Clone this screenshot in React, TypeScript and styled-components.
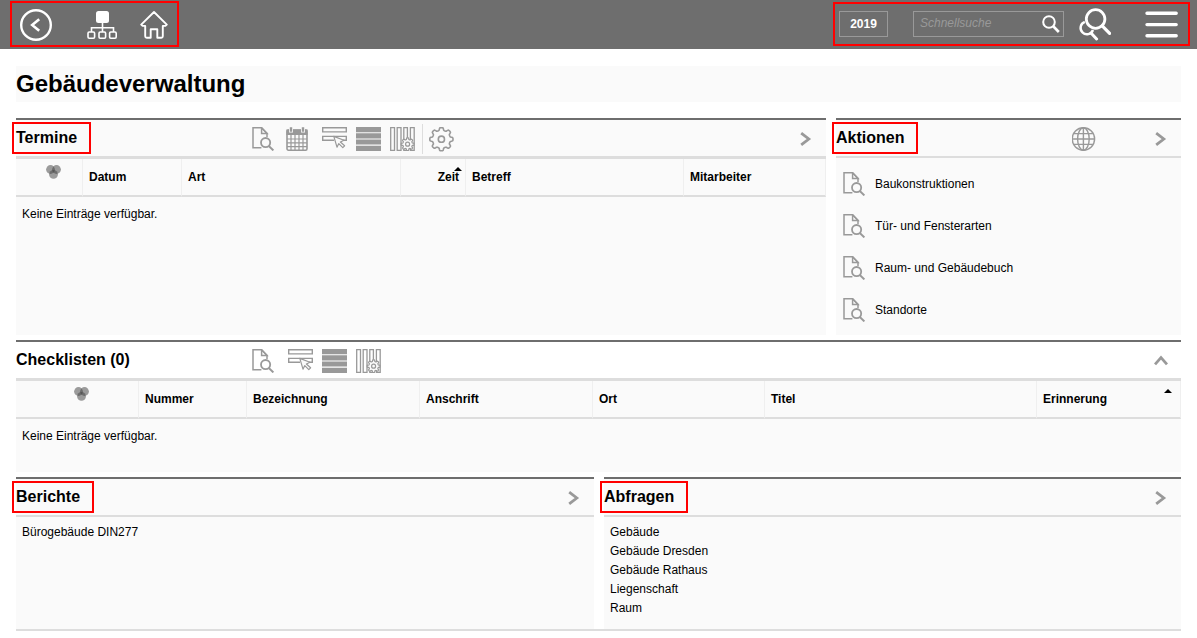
import React from "react";
import styled, { createGlobalStyle, css } from "styled-components";

const color = {
  bar: "#6e6e6e",
  panel: "#fafafa",
  line: "#dddddd",
  cell: "#efefef",
  icon: "#999999",
  mark: "#ff0000",
};

const GlobalStyle = createGlobalStyle`
  *, *::before, *::after { box-sizing: border-box; }
  body {
    margin: 0;
    background: #fff;
    color: #000;
    font: 12px/19px "Liberation Sans", Arial, sans-serif;
  }
`;

/* ---------- top bar ---------- */

const TopBar = styled.header`
  display: flex;
  justify-content: space-between;
  align-items: flex-start;
  height: 49px;
  padding: 1px 7px 0 10px;
  background: ${color.bar};
`;

const BarGroup = styled.div<{ $end?: boolean }>`
  display: flex;
  align-items: center;
  border: 2px solid ${color.mark};
  ${(p) =>
    p.$end
      ? css`
          height: 44px;
          margin-top: 1px;
          padding: 0 10px 0 4px;
        `
      : css`
          height: 46px;
          padding: 2px 9px 0 8px;
        `}
`;

const IconButton = styled.button<{ $before?: number }>`
  display: block;
  flex: none;
  margin: 0 0 0 ${(p) => p.$before ?? 0}px;
  padding: 0;
  border: 0;
  background: none;
  color: inherit;
  cursor: pointer;

  svg {
    display: block;
  }
`;

const BarButton = styled(IconButton)`
  color: #fff;
`;

const YearButton = styled.button`
  width: 49px;
  height: 26px;
  padding: 0;
  border: 1px solid #999;
  background: none;
  color: #fff;
  font: bold 12px/24px "Liberation Sans", Arial, sans-serif;
  cursor: pointer;
`;

const SearchBox = styled.form`
  display: flex;
  align-items: center;
  width: 151px;
  height: 26px;
  margin-left: 25px;
  padding: 0 3px 0 6px;
  border: 1px solid #999;
`;

const SearchInput = styled.input`
  flex: 1;
  min-width: 0;
  height: 22px;
  padding: 0 0 2px;
  border: 0;
  outline: 0;
  background: none;
  color: #fff;
  font: italic 12px/20px "Liberation Sans", Arial, sans-serif;

  &::placeholder {
    color: #999;
    opacity: 1;
  }
`;

/* ---------- page ---------- */

const Page = styled.main`
  padding: 17px 16px 2px;
`;

const PageTitle = styled.h1`
  margin: 0 0 16px;
  background: ${color.panel};
  font-size: 24px;
  line-height: 36px;
`;

const Row = styled.div<{ $columns: string; $closed?: boolean }>`
  display: grid;
  grid-template-columns: ${(p) => p.$columns};
  gap: 10px;
  margin-bottom: 5px;
  border-bottom: ${(p) => (p.$closed ? `2px solid ${color.line}` : "0")};
`;

const Panel = styled.section`
  min-width: 0;
  border-top: 2px solid ${color.bar};
  background: ${color.panel};
`;

const PanelHead = styled.div<{ $table?: boolean; $plain?: boolean }>`
  display: grid;
  grid-template-columns: 236px 1fr auto;
  align-items: start;
  height: ${(p) => (p.$table ? 39 : 38)}px;
  padding-right: 13px;
  border-bottom: ${(p) => (p.$table ? 3 : 2)}px solid ${color.line};
  background: ${(p) => (p.$plain ? "#fff" : "transparent")};
  color: ${color.icon};
`;

const PanelTitle = styled.h2<{ $marked?: boolean }>`
  position: relative;
  justify-self: start;
  margin: 0;
  color: #000;
  font-size: 16px;
  line-height: 35px;

  ${(p) =>
    p.$marked &&
    css`
      &::after {
        content: "";
        position: absolute;
        inset: 2px -14px 1px -4px;
        border: 2px solid ${color.mark};
      }
    `}
`;

const Tools = styled.div`
  display: flex;
  align-items: flex-start;
  gap: 6px;
  padding-top: 7px;
`;

const Divider = styled.span`
  width: 1px;
  height: 30px;
  margin-top: -3px;
  background: ${color.line};
`;

const Toggle = styled(IconButton)`
  grid-column: 3;
  margin-top: 11px;
`;

/* ---------- tables ---------- */

const Table = styled.table`
  width: 100%;
  table-layout: fixed;
  border-collapse: separate;
  border-spacing: 0;
`;

const Col = styled.col<{ $w: number }>`
  width: ${(p) => p.$w}px;
`;

const Th = styled.th<{ $right?: boolean }>`
  position: relative;
  height: 38px;
  padding: 0 6px;
  border-right: 1px solid ${color.cell};
  border-bottom: 2px solid ${color.line};
  text-align: ${(p) => (p.$right ? "right" : "left")};
`;

const ThIcon = styled(Th)`
  padding: 6px 0 0 8px;
  vertical-align: top;

  svg {
    display: block;
    margin: 0 auto;
  }
`;

const SortMark = styled.span<{ $right: number }>`
  position: absolute;
  top: 8px;
  right: ${(p) => p.$right}px;
  border: solid transparent;
  border-width: 0 4px 4px;
  border-bottom-color: #000;
`;

const EmptyCell = styled.td<{ $h: number }>`
  height: ${(p) => p.$h}px;
  padding: 8px 6px 0;
  vertical-align: top;
`;

/* ---------- lists ---------- */

const LinkList = styled.ul`
  min-height: 112px;
  margin: 0;
  padding: 6px 6px 11px;
  list-style: none;
`;

const ActionList = styled.ul`
  margin: 0;
  padding: 5px 7px 4px;
  list-style: none;
`;

const TextLink = styled.a`
  color: #000;
  text-decoration: none;
`;

const ActionLink = styled(TextLink)`
  display: flex;
  align-items: center;
  gap: 4px;
  height: 42px;

  svg {
    color: ${color.icon};
  }
`;

/* ---------- icons ---------- */

/** Closed outline of a cog with rounded teeth, the first one pointing up. */
function cog(cx: number, cy: number, inner: number, outer: number, teeth = 8) {
  const points: string[] = [];
  const steps = teeth * 16;
  for (let i = 0; i < steps; i++) {
    const a = (i / steps) * Math.PI * 2;
    const wave = Math.tanh(2.6 * Math.cos(a * teeth)) / Math.tanh(2.6);
    const r = (inner + outer) / 2 + ((outer - inner) / 2) * wave;
    points.push(`${(cx + r * Math.sin(a)).toFixed(2)} ${(cy - r * Math.cos(a)).toFixed(2)}`);
  }
  return `M${points.join("L")}Z`;
}

const stroke = { fill: "none", stroke: "currentColor" } as const;

const BackIcon = () => (
  <svg width="32" height="32" viewBox="0 0 32 32" {...stroke}>
    <circle cx="16" cy="16" r="14.8" strokeWidth="2.4" />
    <path d="M19.2 10.2 12.2 16l7 5.8" strokeWidth="2.6" />
  </svg>
);

const SitemapIcon = () => (
  <svg width="30" height="32" viewBox="0 0 30 32" {...stroke} strokeWidth="1.6">
    <rect x="9" y="2" width="13" height="12" rx="2.5" fill="currentColor" stroke="none" />
    <path d="M15.5 13v10M4.5 23v-4.2h22V23" />
    <rect x="1" y="23" width="6.6" height="6.2" rx="1.2" />
    <rect x="12" y="23" width="6.6" height="6.2" rx="1.2" />
    <rect x="22.6" y="23" width="6.6" height="6.2" rx="1.2" />
  </svg>
);

const HomeIcon = () => (
  <svg width="28" height="32" viewBox="0 0 28 32" {...stroke} strokeWidth="1.9" strokeLinejoin="round">
    <path d="M14 3 1.2 15.6l1.4 1.3h2.6v10.3q0 1.5 1.5 1.5h4v-8.4h6.6v8.4h4q1.5 0 1.5-1.5V16.9h2.6l1.4-1.3Z" />
  </svg>
);

const SearchIcon = () => (
  <svg width="18" height="18" viewBox="0 0 18 18" {...stroke}>
    <circle cx="7" cy="7" r="5.8" strokeWidth="2" />
    <path d="m11 11 5.8 6" strokeWidth="2.6" />
  </svg>
);

const DoubleSearchIcon = () => (
  <svg width="33" height="34" viewBox="0 -1 33 34" {...stroke}>
    <circle cx="17.6" cy="11" r="9.3" strokeWidth="2.8" />
    <path d="m24.2 17.8 7.4 7.6" strokeWidth="3.2" strokeLinecap="round" />
    <path d="M6.8 13.8a6.4 6.4 0 1 0 8.2 8.2" strokeWidth="2.4" />
    <path d="m13 25 5.6 6" strokeWidth="3" strokeLinecap="round" />
  </svg>
);

const MenuIcon = () => (
  <svg width="33" height="28" viewBox="0 0 33 28" {...stroke} strokeWidth="3.4" strokeLinecap="round">
    <path d="M2 3.3h29.2M2 14.6h29.2M2 25.8h29.2" />
  </svg>
);

const DocSearchIcon = () => (
  <svg width="28" height="24" viewBox="0 0 28 24" {...stroke} strokeWidth="1.5">
    <path d="M9.4 20.8H1V.8h8.6L15 6.4V10" />
    <path d="M9.6.8v5.6H15Z" />
    <circle cx="13.6" cy="15.6" r="4.6" strokeWidth="1.8" />
    <path d="m16.8 19 4.6 4.4" strokeWidth="2" />
  </svg>
);

const CalendarIcon = () => (
  <svg width="28" height="24" viewBox="0 0 28 24" {...stroke} strokeWidth="1.2">
    <rect x="1" y="3" width="20" height="20.2" rx="1.4" strokeWidth="1.6" />
    <path d="M1 3h20v4.4H1Z" fill="currentColor" />
    <path d="M1 12h20M1 15.8h20M1 19.6h20M5 8v15M9 8v15M13 8v15M17 8v15" />
    <path d="M5 0v5.4M17 0v5.4" stroke={color.panel} strokeWidth="4" />
    <path d="M5 .2v4.6M17 .2v4.6" strokeWidth="2.4" />
  </svg>
);

const SelectIcon = () => (
  <svg width="28" height="24" viewBox="0 0 28 24" {...stroke} strokeWidth="1.4">
    <path d="M2.7.7h23.6v4.2H2.7ZM14 13.2H2.7V9.4h23.6v3.8H23" />
    <path
      d="m13.8 9.4 10.2 3.8-3.6 1.8 4.2 3.8-1.8 1.8-4-4-1.8 3.6Z"
      fill={color.panel}
      strokeWidth="1.2"
      strokeLinejoin="round"
    />
  </svg>
);

const RowsIcon = () => (
  <svg width="28" height="24" viewBox="0 0 28 24" fill="currentColor">
    <path d="M2 0h25v5.2H2ZM2 6.2h25v5.2H2ZM2 12.4h25v5.2H2ZM2 18.8h25V24H2Z" />
  </svg>
);

const ColumnsIcon = () => (
  <svg width="28" height="24" viewBox="0 0 28 24" {...stroke} strokeWidth="1.3">
    <path d="M2.7.7h3.8v22.6H2.7ZM9.2.7H13v22.6H9.2ZM15.8.7h3.6v22.6h-3.6ZM22.4.7h3.8v22.6h-3.8Z" />
    <path d={cog(19.6, 17.2, 4.8, 6.4)} fill={color.panel} strokeWidth="1.2" />
    <circle cx="19.6" cy="17.2" r="2" strokeWidth="1.2" />
  </svg>
);

const GearIcon = () => (
  <svg width="26" height="26" viewBox="0 0 26 26" {...stroke} strokeWidth="1.6">
    <path d={cog(12.4, 12.2, 9, 11.6)} strokeLinejoin="round" />
    <circle cx="12.4" cy="12.2" r="3.1" />
  </svg>
);

const GlobeIcon = () => (
  <svg width="26" height="24" viewBox="0 0 26 24" {...stroke} strokeWidth="1.4">
    <circle cx="11.4" cy="12" r="11.2" />
    <ellipse cx="11.4" cy="12" rx="5.8" ry="11.2" />
    <path d="M11.4.8v22.4M.2 12h22.4M2 6.6h18.8M2 17.4h18.8" />
  </svg>
);

const ChevronIcon = ({ up = false }: { up?: boolean }) => (
  <svg width="14" height="16" viewBox="0 0 14 16" {...stroke} strokeWidth="2.8">
    <path d={up ? "M1 11.4 7 4.6l6 6.8" : "M2.2 2.2 9.8 8l-7.6 5.8"} />
  </svg>
);

const CirclesIcon = () => (
  <svg width="15" height="14" viewBox="0 0 15 14" fill="#444" fillOpacity="0.52">
    <circle cx="4.5" cy="4.5" r="4.4" />
    <circle cx="10.5" cy="4.5" r="4.4" />
    <circle cx="7.5" cy="9.4" r="4.4" />
  </svg>
);

/* ---------- data and parts ---------- */

type Column = { label: string; width: number; right?: boolean; sort?: number };

const appointments: Column[] = [
  { label: "", width: 67 },
  { label: "Datum", width: 99 },
  { label: "Art", width: 219 },
  { label: "Zeit", width: 65, right: true, sort: 3 },
  { label: "Betreff", width: 218 },
  { label: "Mitarbeiter", width: 142 },
];

const checklists: Column[] = [
  { label: "", width: 123 },
  { label: "Nummer", width: 108 },
  { label: "Bezeichnung", width: 173 },
  { label: "Anschrift", width: 173 },
  { label: "Ort", width: 172 },
  { label: "Titel", width: 272 },
  { label: "Erinnerung", width: 144, sort: 8 },
];

const actions = ["Baukonstruktionen", "Tür- und Fensterarten", "Raum- und Gebäudebuch", "Standorte"];
const queries = ["Gebäude", "Gebäude Dresden", "Gebäude Rathaus", "Liegenschaft", "Raum"];

function EmptyTable({ columns, bodyHeight }: { columns: Column[]; bodyHeight: number }) {
  return (
    <Table>
      <colgroup>
        {columns.map((c) => (
          <Col key={c.label} $w={c.width} />
        ))}
      </colgroup>
      <thead>
        <tr>
          {columns.map((c) =>
            c.label ? (
              <Th key={c.label} scope="col" $right={c.right}>
                {c.label}
                {c.sort !== undefined && <SortMark $right={c.sort} />}
              </Th>
            ) : (
              <ThIcon key="status" scope="col" aria-label="Status">
                <CirclesIcon />
              </ThIcon>
            ),
          )}
        </tr>
      </thead>
      <tbody>
        <tr>
          <EmptyCell colSpan={columns.length} $h={bodyHeight}>
            Keine Einträge verfügbar.
          </EmptyCell>
        </tr>
      </tbody>
    </Table>
  );
}

const Tool = ({ label, children }: { label: string; children: React.ReactNode }) => (
  <IconButton type="button" aria-label={label}>
    {children}
  </IconButton>
);

export default function App() {
  return (
    <>
      <GlobalStyle />
      <TopBar>
        <BarGroup>
          <BarButton type="button" aria-label="Zurück"><BackIcon /></BarButton>
          <BarButton type="button" aria-label="Struktur" $before={35}><SitemapIcon /></BarButton>
          <BarButton type="button" aria-label="Startseite" $before={23}><HomeIcon /></BarButton>
        </BarGroup>
        <BarGroup $end>
          <YearButton type="button">2019</YearButton>
          <SearchBox role="search" onSubmit={(e) => e.preventDefault()}>
            <SearchInput type="text" placeholder="Schnellsuche" aria-label="Schnellsuche" />
            <BarButton type="submit" aria-label="Suchen"><SearchIcon /></BarButton>
          </SearchBox>
          <BarButton type="button" aria-label="Erweiterte Suche" $before={14}><DoubleSearchIcon /></BarButton>
          <BarButton type="button" aria-label="Menü" $before={34}><MenuIcon /></BarButton>
        </BarGroup>
      </TopBar>

      <Page>
        <PageTitle>Gebäudeverwaltung</PageTitle>

        <Row $columns="810fr 345fr">
          <Panel>
            <PanelHead $table>
              <PanelTitle $marked>Termine</PanelTitle>
              <Tools>
                <Tool label="Anzeigen"><DocSearchIcon /></Tool>
                <Tool label="Kalender"><CalendarIcon /></Tool>
                <Tool label="Auswählen"><SelectIcon /></Tool>
                <Tool label="Zeilen"><RowsIcon /></Tool>
                <Tool label="Spalten"><ColumnsIcon /></Tool>
                <Divider />
                <Tool label="Einstellungen"><GearIcon /></Tool>
              </Tools>
              <Toggle type="button" aria-label="Termine öffnen"><ChevronIcon /></Toggle>
            </PanelHead>
            <EmptyTable columns={appointments} bodyHeight={138} />
          </Panel>

          <Panel>
            <PanelHead>
              <PanelTitle $marked>Aktionen</PanelTitle>
              <Tools>
                <Tool label="Web"><GlobeIcon /></Tool>
              </Tools>
              <Toggle type="button" aria-label="Aktionen öffnen"><ChevronIcon /></Toggle>
            </PanelHead>
            <ActionList>
              {actions.map((a) => (
                <li key={a}>
                  <ActionLink href="#"><DocSearchIcon />{a}</ActionLink>
                </li>
              ))}
            </ActionList>
          </Panel>
        </Row>

        <Row $columns="1fr">
          <Panel>
            <PanelHead $table $plain>
              <PanelTitle>Checklisten (0)</PanelTitle>
              <Tools>
                <Tool label="Anzeigen"><DocSearchIcon /></Tool>
                <Tool label="Auswählen"><SelectIcon /></Tool>
                <Tool label="Zeilen"><RowsIcon /></Tool>
                <Tool label="Spalten"><ColumnsIcon /></Tool>
              </Tools>
              <Toggle type="button" aria-label="Checklisten schließen"><ChevronIcon up /></Toggle>
            </PanelHead>
            <EmptyTable columns={checklists} bodyHeight={53} />
          </Panel>
        </Row>

        <Row $columns="578fr 577fr" $closed>
          <Panel>
            <PanelHead>
              <PanelTitle $marked>Berichte</PanelTitle>
              <Toggle type="button" aria-label="Berichte öffnen"><ChevronIcon /></Toggle>
            </PanelHead>
            <LinkList>
              <li><TextLink href="#">Bürogebäude DIN277</TextLink></li>
            </LinkList>
          </Panel>
          <Panel>
            <PanelHead>
              <PanelTitle $marked>Abfragen</PanelTitle>
              <Toggle type="button" aria-label="Abfragen öffnen"><ChevronIcon /></Toggle>
            </PanelHead>
            <LinkList>
              {queries.map((q) => (
                <li key={q}><TextLink href="#">{q}</TextLink></li>
              ))}
            </LinkList>
          </Panel>
        </Row>
      </Page>
    </>
  );
}
